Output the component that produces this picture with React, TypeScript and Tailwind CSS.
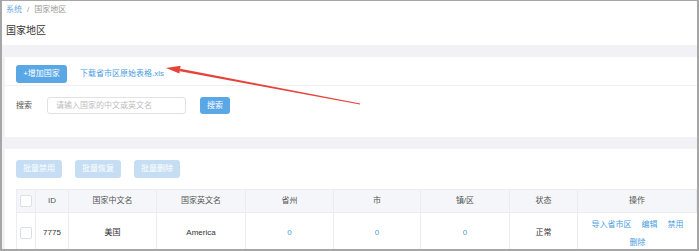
import React from 'react';

const cols = [
  { key: 'chk', w: 'w-[19px]', label: '' },
  { key: 'id', w: 'w-[33px]', label: 'ID' },
  { key: 'cn', w: 'w-[88px]', label: '国家中文名' },
  { key: 'en', w: 'w-[89px]', label: '国家英文名' },
  { key: 'prov', w: 'w-[88px]', label: '省州' },
  { key: 'city', w: 'w-[87px]', label: '市' },
  { key: 'town', w: 'w-[89px]', label: '镇/区' },
  { key: 'status', w: 'w-[68px]', label: '状态' },
  { key: 'ops', w: 'flex-1', label: '操作' },
];

const Checkbox = () => (
  <span className="block w-[12px] h-[12px] rounded-[2px] border border-[#dcdfe6] bg-white" />
);

export default function App() {
  return (
    <div
      className="relative w-[699px] h-[251px] overflow-hidden bg-white border-l-2 border-r-2 border-t border-b-2 border-[#a6a6a6] text-[#333]"
      style={{ fontFamily: '"Liberation Sans", "Noto Sans CJK SC", sans-serif' }}
    >
      {/* 頂部標題 */}
      <div className="h-[44px] px-[4px] pt-[3px]">
        <div className="text-[8px] leading-[11px] text-[#999]">
          <span className="text-[#6aa8e0]">系统</span>
          <span className="mx-[5px]">/</span>
          <span>国家地区</span>
        </div>
        <div className="mt-[9px] text-[10px] leading-[14px] text-[#333]">国家地区</div>
      </div>

      <div className="bg-[#f1f1f6] pl-[3px] pt-[12px] h-full">
        {/* 搜索卡片 */}
        <div className="bg-white h-[80px]">
          <div className="flex items-center gap-[13px] pl-[11px] pt-[5px] h-[29px] border-b border-[#f0f0f0]">
            <button className="h-[18px] w-[51px] rounded-[3px] bg-[#5aa7e6] text-white text-[8px] leading-[18px]">
              +增加国家
            </button>
            <a className="text-[8px] text-[#4b9de0] leading-[18px]">下载省市区原始表格.xls</a>
          </div>
          <div className="flex items-center pl-[11px] pt-[11px]">
            <span className="text-[8px] text-[#555] w-[31px]">搜索</span>
            <div className="w-[139px] h-[17px] rounded-[3px] border border-[#e2e2e2] pl-[8px] text-[8px] leading-[15px] text-[#bdbdbd]">
              请输入国家的中文或英文名
            </div>
            <button className="ml-[14px] h-[17px] w-[30px] rounded-[3px] bg-[#5aa7e6] text-white text-[8px] leading-[17px]">
              搜索
            </button>
          </div>
        </div>

        {/* 列表卡片 */}
        <div className="bg-white mt-[12px] pl-[11px] pt-[11px] h-[120px]">
          <div className="flex gap-[13px]">
            {['批量禁用', '批量恢复', '批量删除'].map((t) => (
              <button
                key={t}
                className="h-[18px] w-[46px] rounded-[3px] bg-[#c6def3] text-white text-[8px] leading-[18px]"
              >
                {t}
              </button>
            ))}
          </div>

          <div className="mt-[11px] border-l border-t border-[#e9ecf0] text-[8px]">
            <div className="flex h-[23px] bg-[#f4f6f9] border-b border-[#e9ecf0]">
              {cols.map((c) => (
                <div
                  key={c.key}
                  className={`${c.w} flex items-center justify-center border-r border-[#e9ecf0] text-[#555]`}
                >
                  {c.key === 'chk' ? <Checkbox /> : c.label}
                </div>
              ))}
            </div>
            <div className="flex h-[40px]">
              <div className="w-[19px] flex items-center justify-center border-r border-[#e9ecf0]">
                <Checkbox />
              </div>
              <div className="w-[33px] flex items-center justify-center border-r border-[#e9ecf0]">7775</div>
              <div className="w-[88px] flex items-center justify-center border-r border-[#e9ecf0]">美国</div>
              <div className="w-[89px] flex items-center justify-center border-r border-[#e9ecf0]">America</div>
              <div className="w-[88px] flex items-center justify-center border-r border-[#e9ecf0] text-[#4b9de0]">0</div>
              <div className="w-[87px] flex items-center justify-center border-r border-[#e9ecf0] text-[#4b9de0]">0</div>
              <div className="w-[89px] flex items-center justify-center border-r border-[#e9ecf0] text-[#4b9de0]">0</div>
              <div className="w-[68px] flex items-center justify-center border-r border-[#e9ecf0]">正常</div>
              <div className="flex-1 flex flex-col items-center pt-[6px] gap-[7px] text-[#4b9de0] leading-[11px]">
                <div className="flex gap-[10px]">
                  <span>导入省市区</span>
                  <span>编辑</span>
                  <span>禁用</span>
                </div>
                <span>删除</span>
              </div>
            </div>
          </div>
        </div>
      </div>

      {/* 標註箭頭 */}
      <svg className="absolute left-0 top-0 pointer-events-none" width="699" height="251">
        <polygon points="164,67 178.6,64.8 177.4,72.6" fill="#e5443a" />
        <polygon points="177.9,70.2 178.3,67.8 358.2,102.6 358,103.4" fill="#e5443a" />
      </svg>
    </div>
  );
}
